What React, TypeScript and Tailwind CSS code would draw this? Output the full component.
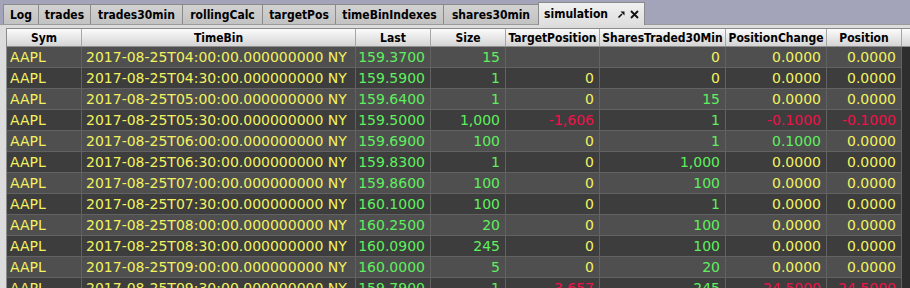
import React from "react";

type C = "Y" | "G" | "R";
type Cell = [string, C];

const cols: { name: string; w: number; align: "l" | "r" }[] = [
  { name: "Sym", w: 75, align: "l" },
  { name: "TimeBin", w: 274, align: "l" },
  { name: "Last", w: 75, align: "r" },
  { name: "Size", w: 75, align: "r" },
  { name: "TargetPosition", w: 94, align: "r" },
  { name: "SharesTraded30Min", w: 126, align: "r" },
  { name: "PositionChange", w: 101, align: "r" },
  { name: "Position", w: 75, align: "r" },
];

const raw: [string, string, string, Cell, Cell, Cell, Cell][] = [
  ["04:00", "159.3700", "15", ["", "Y"], ["0", "Y"], ["0.0000", "Y"], ["0.0000", "Y"]],
  ["04:30", "159.5900", "1", ["0", "Y"], ["0", "Y"], ["0.0000", "Y"], ["0.0000", "Y"]],
  ["05:00", "159.6400", "1", ["0", "Y"], ["15", "G"], ["0.0000", "Y"], ["0.0000", "Y"]],
  ["05:30", "159.5000", "1,000", ["-1,606", "R"], ["1", "G"], ["-0.1000", "R"], ["-0.1000", "R"]],
  ["06:00", "159.6900", "100", ["0", "Y"], ["1", "G"], ["0.1000", "G"], ["0.0000", "Y"]],
  ["06:30", "159.8300", "1", ["0", "Y"], ["1,000", "G"], ["0.0000", "Y"], ["0.0000", "Y"]],
  ["07:00", "159.8600", "100", ["0", "Y"], ["100", "G"], ["0.0000", "Y"], ["0.0000", "Y"]],
  ["07:30", "160.1000", "100", ["0", "Y"], ["1", "G"], ["0.0000", "Y"], ["0.0000", "Y"]],
  ["08:00", "160.2500", "20", ["0", "Y"], ["100", "G"], ["0.0000", "Y"], ["0.0000", "Y"]],
  ["08:30", "160.0900", "245", ["0", "Y"], ["100", "G"], ["0.0000", "Y"], ["0.0000", "Y"]],
  ["09:00", "160.0000", "5", ["0", "Y"], ["20", "G"], ["0.0000", "Y"], ["0.0000", "Y"]],
  ["09:30", "159.7900", "1", ["-3,657", "R"], ["245", "G"], ["-24.5000", "R"], ["-24.5000", "R"]],
];

const colorCls: Record<C, string> = {
  Y: "text-[#f2f260]",
  G: "text-[#5ef05e]",
  R: "text-[#f0104a]",
};

const tabs: { name: string; w: number }[] = [
  { name: "Log", w: 35 },
  { name: "trades", w: 52 },
  { name: "trades30min", w: 92 },
  { name: "rollingCalc", w: 80 },
  { name: "targetPos", w: 73 },
  { name: "timeBinIndexes", w: 108 },
  { name: "shares30min", w: 95 },
];

const boldFont = { fontFamily: '"DejaVu Sans Condensed", "DejaVu Sans", sans-serif', fontStretch: "condensed" as const };

export default function App() {
  return (
    <div className="w-[910px] h-[288px] overflow-hidden bg-[#a3a3ba] flex flex-col">
      {/* tab bar */}
      <div className="h-[24px] flex items-end pl-[3px] shrink-0">
        {tabs.map((t) => (
          <div
            key={t.name}
            style={{ width: t.w, ...boldFont }}
            className="h-[20px] border-l border-t border-[#8a8a8a] bg-[linear-gradient(#d2d2d2,#c2c2c2)] flex items-center justify-center text-[12px] font-bold text-black"
          >
            {t.name}
          </div>
        ))}
        <div
          style={boldFont}
          className="w-[107px] h-[23px] -mb-[1px] border-l border-t border-r border-[#8a8a8a] bg-[linear-gradient(#f0f0f0,#dedede)] flex items-center pl-[5px] text-[12px] font-bold text-black relative z-10"
        >
          <span>simulation</span>
          <svg className="ml-[9px]" width="9" height="9" viewBox="0 0 9 9">
            <path d="M1.5 7.5 L5 4" stroke="#111" strokeWidth="1.6" />
            <path d="M3.5 1.5 H7.5 V5.5 Z" fill="#111" />
          </svg>
          <svg className="ml-[4px]" width="9" height="9" viewBox="0 0 9 9">
            <path d="M1 1 L8 8 M8 1 L1 8" stroke="#111" strokeWidth="1.8" />
          </svg>
        </div>
      </div>
      {/* panel */}
      <div className="flex-1 bg-[#dcdcdc] border-t border-[#9a9a9a] pt-[3px] pl-[6px] flex flex-col min-h-0">
        <div className="flex-1 border-l border-t border-[#8a8a8a] bg-[#2e2e2e] flex flex-col min-h-0" style={{ fontFamily: '"DejaVu Sans", sans-serif' }}>
          {/* header */}
          <div className="h-[18px] flex shrink-0 bg-[linear-gradient(#fbfbfb,#e6e6e6_55%,#d4d4d4)] border-b border-[#8e8e8e]">
            {cols.map((c) => (
              <div
                key={c.name}
                style={{ width: c.w, ...boldFont }}
                className="h-full border-r border-[#a6a6a6] flex items-center justify-center text-[12px] font-bold text-black whitespace-nowrap overflow-hidden"
              >
                {c.name}
              </div>
            ))}
            <div className="flex-1" />
          </div>
          {/* rows */}
          {raw.map((r, i) => {
            const cells: Cell[] = [
              ["AAPL", "Y"],
              [`2017-08-25T${r[0]}:00.000000000 NY`, "Y"],
              [r[1], "G"],
              [r[2], "G"],
              r[3],
              r[4],
              r[5],
              r[6],
            ];
            return (
              <div key={i} className={`h-[21px] shrink-0 flex ${i % 2 === 0 ? "bg-[#4f4f4f]" : "bg-[#3d3d3d]"}`}>
                {cells.map((c, j) => (
                  <div
                    key={j}
                    style={{ width: cols[j].w }}
                    className={`h-full border-r border-b border-[#626262] flex items-center pt-[1px] text-[14px] whitespace-nowrap overflow-hidden ${
                      cols[j].align === "l" ? (j === 0 ? "pl-[3px]" : "pl-[4px]") : "justify-end pr-[5px]"
                    } ${colorCls[c[1]]}`}
                  >
                    {c[0]}
                  </div>
                ))}
                <div className="flex-1 bg-[#2e2e2e]" />
              </div>
            );
          })}
        </div>
      </div>
    </div>
  );
}
